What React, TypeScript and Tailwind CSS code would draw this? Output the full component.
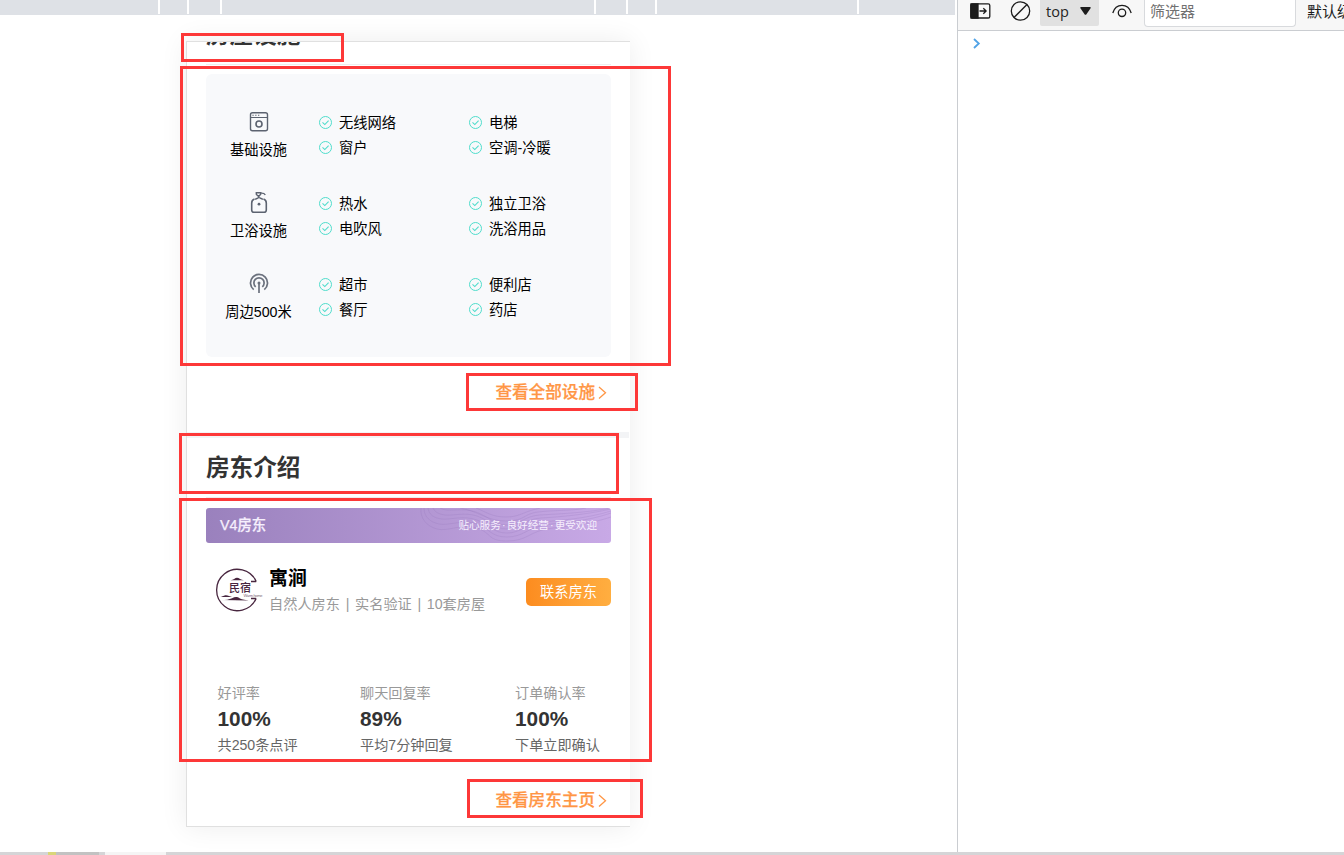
import React from "react";

const facilities = [
  { label: "基础设施", icon: "washer", items: ["无线网络", "电梯", "窗户", "空调-冷暖"] },
  { label: "卫浴设施", icon: "bath", items: ["热水", "独立卫浴", "电吹风", "洗浴用品"] },
  { label: "周边500米", icon: "signal", items: ["超市", "便利店", "餐厅", "药店"] },
];

const stats = [
  { name: "好评率", value: "100%", note: "共250条点评", width: "w-[142.5px]" },
  { name: "聊天回复率", value: "89%", note: "平均7分钟回复", width: "w-[155px]" },
  { name: "订单确认率", value: "100%", note: "下单立即确认", width: "w-[96px]" },
];

const rulerSegments = [
  "w-[158px]",
  "w-[27px]",
  "w-[31px]",
  "w-[372px]",
  "w-[30px]",
  "w-[27px]",
  "w-[200px]",
  "w-[96px]",
];

const marks = [
  "left-[181px] top-[33px] w-[163px] h-[29px]",
  "left-[180px] top-[66px] w-[491px] h-[300px]",
  "left-[466px] top-[373px] w-[172px] h-[38px]",
  "left-[179px] top-[433px] w-[440px] h-[61px]",
  "left-[179px] top-[498px] w-[473px] h-[264px]",
  "left-[467px] top-[779px] w-[176px] h-[39px]",
];

function CheckIcon() {
  return (
    <svg className="h-[13px] w-[13px] shrink-0" viewBox="0 0 13 13" fill="none" stroke="#4fdccb">
      <circle cx="6.5" cy="6.5" r="6" strokeWidth="1" />
      <path d="M3.5 6.4l2.3 2.2 3.8-3.9" strokeWidth="1.1" />
    </svg>
  );
}

function FacilityIcon({ kind }: { kind: string }) {
  if (kind === "washer") {
    return (
      <svg className="h-6 w-6" viewBox="0 0 24 24" fill="none" stroke="#5c6370" strokeWidth="1.4">
        <rect x="3.5" y="2.7" width="17" height="18" rx="2" />
        <path d="M3.3 7.5h17.4" strokeWidth="1" />
        <path d="M5.4 5.2h1.3M8.2 5.2h1.3M11 5.2h1.3" strokeWidth="1.1" />
        <circle cx="12" cy="14" r="3" strokeWidth="1.6" />
      </svg>
    );
  }
  if (kind === "bath") {
    return (
      <svg className="h-6 w-6" viewBox="0 0 24 24" fill="none" stroke="#5c6370" strokeWidth="1.6">
        <path d="M7.500 8C5.400 8.600 4.700 10 4.700 12v6.900c0 1.600.7 2.300 2.300 2.300h10c1.600 0 2.300-.7 2.300-2.300V12c0-2-.7-3.400-2.800-4" />
        <path d="M9.300 1.800h4.400v1.500l-1.400 1.400h-1.600L9.300 3.300zM13.700 2.200c2.300-.2 3.800.3 4.600 1.800" strokeWidth="1.400" />
        <path d="M11.700 4.700v1.600M8 7.800c1.500 1 2.300-1.200 4-1.200s2.500 2.200 4 1.200" strokeWidth="1.400" />
        <circle cx="12" cy="13.200" r="1.400" fill="#5c6370" stroke="none" />
      </svg>
    );
  }
  return (
    <svg className="h-6 w-6" viewBox="0 0 24 24" fill="none" stroke="#6b717d" strokeWidth="1.700">
      <path d="M6.700 17.600A8.500 8.500 0 1 1 17.300 17.600" />
      <path d="M8.700 14.800a5.100 5.100 0 1 1 6.600 0" />
      <circle cx="12" cy="11" r="1.500" fill="#6b717d" stroke="none" />
      <path d="M12 11v10" strokeWidth="1.700" />
    </svg>
  );
}

function MoreLink({ text }: { text: string }) {
  return (
    <div className="flex h-6 items-center justify-end pr-[23px] text-[16.6px] font-medium leading-6 text-[#ff9645] [-webkit-text-stroke:0.25px_#ff9645]">
      <span>{text}</span>
      <svg className="ml-[3px] h-4 w-[9px]" viewBox="0 0 9 16" fill="none" stroke="#ff9645" strokeWidth="1.3">
        <path d="M1 2L7.500 7.800 1 13.500" />
      </svg>
    </div>
  );
}

function HostLogo() {
  return (
    <svg className="h-[46px] w-[52px] shrink-0" viewBox="0 0 52 46">
      <path
        d="M41.200 14.500A20.700 20.700 0 1 0 41.200 31.500M36 14.500h5.200M36 31.500h5.200"
        fill="none"
        stroke="#48263f"
        strokeWidth="1.300"
      />
      <path d="M15.500 13.300c3-.3 4.600-2.600 6.500-2.600s4 2.300 7 2.600z" fill="#48263f" />
      <path d="M4 30c4-.3 5-1.800 7-1.800s4 1.400 6 1.800zM6 33c5 0 8-.4 11-1.800 3-1.600 5-1.800 8 .2 2 1.400 6 1.500 10.500 2.200z" fill="#48263f" />
      <text x="14" y="25.400" fontSize="11" fontWeight="500" fill="#48263f">民宿</text>
      <text x="28.500" y="30.400" fontSize="4" textLength="19" fill="#80677a">Warm home</text>
    </svg>
  );
}

function Banner() {
  return (
    <div className="relative flex h-[35px] items-center justify-between overflow-hidden rounded-[3px] bg-linear-to-r from-[#9a81bd] to-[#c8a9e6] pl-[14px] pr-[14px] text-[#f6effd]">
      <svg className="absolute left-[214px] top-0 h-[35px] w-[191px]" viewBox="0 0 191 35" fill="none" stroke="#8e70b5" strokeOpacity="0.25" strokeWidth="0.8">
        <path d="M1 0c-1 10 5 18 16 21s25-6 40-1 10 13 30 13 22-9 40-12 40-4 64-12" />
        <path d="M4 0c0 9 6 14 15 16s25-5 38 0 14 13 30 13 20-9 38-12 40-3 66-12" />
        <path d="M8 0c1 7 6 10 14 11s22-4 35 1 16 13 30 13 18-9 36-11 42-3 68-11" />
        <path d="M13 0c2 4 5 6 12 7s20-3 32 1 17 13 30 13 17-10 34-11 43-3 70-9" />
        <path d="M20 0c8 5 22-1 36 4s18 13 31 13 17-9 33-10 45-2 71-7" />
        <path d="M40 0c18 3 27 13 46 13s17-7 32-9 35-1 48-4" />
        <path d="M56 0c10 4 16 9 30 9s16-5 34-9" />
      </svg>
      <span className="relative text-[14.3px] font-medium [-webkit-text-stroke:0.25px_#f6effd]">V4房东</span>
      <span className="relative text-[10.6px]">
        贴心服务<span className="mx-[1.1px]">·</span>良好经营<span className="mx-[1.1px]">·</span>更受欢迎
      </span>
    </div>
  );
}

function Phone() {
  return (
    <div className="h-[786px] w-[444px] bg-white shadow-[0_0_26px_rgba(0,0,0,0.075)]">
      <div className="flex h-full w-full flex-col overflow-hidden border-y border-l border-[#e0e0e0]">
        <div className="mx-[19px] flex h-[23px] shrink-0 items-end border-b border-[#eeeeee] pb-[12px]">
          <h2 className="text-[23.6px] font-bold leading-[34px] text-[#333]">房屋设施</h2>
        </div>
        <div className="ml-[19px] mt-[9px] flex h-[283px] w-[405px] shrink-0 flex-col rounded-md bg-[#f8f9fb] pt-[34px] text-[14.25px] text-black">
          {facilities.map((f) => (
            <div key={f.label} className="flex h-[81px] shrink-0">
              <div className="flex w-[105px] flex-col items-center pt-[2px]">
                <FacilityIcon kind={f.icon} />
                <div className="mt-[6px] leading-5">{f.label}</div>
              </div>
              <div className="ml-2 grid h-[53px] grid-cols-[150px_130px] grid-rows-[25px_25px] pt-[2px]">
                {f.items.map((item) => (
                  <div key={item} className="flex items-center gap-[7px]">
                    <CheckIcon />
                    <span className="leading-5">{item}</span>
                  </div>
                ))}
              </div>
            </div>
          ))}
        </div>
        <div className="mt-[24px] shrink-0">
          <MoreLink text="查看全部设施" />
        </div>
        <div className="mt-[27px] h-[6px] w-[442px] shrink-0 bg-[#f3f4f6]" />
        <div className="mx-[19px] flex h-[60px] w-[405px] shrink-0 items-center border-b border-[#eeeeee]">
          <h2 className="text-[23.6px] font-bold leading-[34px] text-[#333]">房东介绍</h2>
        </div>
        <div className="ml-[19px] mt-[10px] w-[405px] shrink-0">
          <Banner />
          <div className="mt-[24px] flex h-[46px] items-start pl-[9px]">
            <HostLogo />
            <div className="ml-[2px]">
              <div className="text-[18.9px] font-bold leading-6 text-black">寓涧</div>
              <div className="whitespace-nowrap text-[14.2px] leading-[26px] text-[#999]">
                自然人房东<span className="mx-[5.7px]">|</span>实名验证<span className="mx-[5.7px]">|</span>10套房屋
              </div>
            </div>
            <div className="ml-auto mt-[11px] flex h-[28px] w-[85px] items-center justify-center rounded-[5px] bg-linear-to-r from-[#fc8c1f] to-[#ffae40] pt-px text-[14.25px] text-white">
              联系房东
            </div>
          </div>
          <div className="mt-[70px] flex pl-[11.5px]">
            {stats.map((s) => (
              <div key={s.name} className={"shrink-0 whitespace-nowrap text-[14.15px] " + s.width}>
                <div className="leading-5 text-[#999]">{s.name}</div>
                <div className="text-[20.8px] font-bold leading-8 text-[#333]">{s.value}</div>
                <div className="leading-5 text-[#666]">{s.note}</div>
              </div>
            ))}
          </div>
        </div>
        <div className="mt-[34px] shrink-0">
          <MoreLink text="查看房东主页" />
        </div>
      </div>
    </div>
  );
}

function DevTools() {
  return (
    <div className="flex h-[852px] min-w-0 flex-1 flex-col border-l border-[#cacdd1] bg-white font-['Open_Sans','Noto_Sans_CJK_SC',sans-serif]">
      <div className="flex h-[31px] shrink-0 items-start overflow-hidden border-b border-[#cacdd1] bg-[#f7f7f7]">
        <svg className="ml-[12px] mt-[3px] h-4 w-[21px] shrink-0" viewBox="0 0 21 16" fill="none" stroke="#1b1b1b" strokeWidth="1.3">
          <rect x="0.8" y="0.8" width="19" height="14.2" rx="1.6" />
          <path d="M1 1h7v14H1z" fill="#1b1b1b" />
          <path d="M9.5 8h6.500M13.300 5.200L16.100 8l-2.800 2.800" />
        </svg>
        <svg className="ml-[19px] mt-px h-[21px] w-[21px] shrink-0" viewBox="0 0 21 21" fill="none" stroke="#1b1b1b" strokeWidth="1.3">
          <circle cx="10.5" cy="10" r="9.2" />
          <path d="M4 16.5L17 3.5" />
        </svg>
        <div className="ml-[9px] flex h-[26px] w-[59px] shrink-0 items-start rounded-b-[2px] bg-[#e1e1e1] pl-[6px] text-[14.5px] leading-[23px] text-[#242424]">
          top
          <svg className="ml-[11px] mt-[7px] h-2 w-[11px]" viewBox="0 0 11 8">
            <path d="M1.300 0h8.400c1 0 1.300.6.7 1.500L6.300 7.400c-.5.6-1.100.6-1.600 0L.6 1.500C0 .6.3 0 1.300 0z" fill="#1b1b1b" />
          </svg>
        </div>
        <svg className="ml-[13px] mt-[4px] h-[14px] w-5 shrink-0" viewBox="0 0 20 14" fill="none" stroke="#1b1b1b" strokeWidth="1.3">
          <path d="M.8 9C2.200 4 5.500 1.300 10 1.300S17.800 4 19.200 9" />
          <circle cx="10" cy="8.800" r="3.700" />
        </svg>
        <div className="ml-[12px] h-[27px] w-[152px] shrink-0 rounded-b-[4px] border-x border-b border-[#d8dadd] bg-white pl-[5px] text-[15px] leading-[23px] text-[#717171]">
          筛选器
        </div>
        <div className="ml-[11px] shrink-0 whitespace-nowrap text-[15px] leading-[23px] text-[#1b1b1b]">默认级别</div>
      </div>
      <svg className="ml-[15px] mt-[7px] h-[11px] w-[8px]" viewBox="0 0 8 11" fill="none" stroke="#51a3e6" strokeWidth="1.800">
        <path d="M1 1l4.800 4.500L1 10" />
      </svg>
    </div>
  );
}

export default function App() {
  return (
    <div className="relative flex h-[855px] w-[1344px] flex-col overflow-hidden bg-white font-['Liberation_Sans','Noto_Sans_CJK_SC',sans-serif]">
      <div className="flex h-[852px] w-full">
        <div className="flex w-[957px] shrink-0 flex-col">
          <div className="flex h-[15px] w-[955px] shrink-0 gap-[2px] border-b border-[#dee1e6]">
            {rulerSegments.map((w, i) => (
              <div key={i} className={"h-full shrink-0 bg-[#dee1e6] " + w} />
            ))}
          </div>
          <div className="pl-[186px] pt-[26px]">
            <Phone />
          </div>
        </div>
        <DevTools />
      </div>
      <div className="z-10 flex h-[3px] w-full bg-[#d5d5d7]">
        <div className="ml-[48px] w-[8px] bg-[#d9d67a]" />
        <div className="w-[43px] bg-[#c2c2c2]" />
        <div className="ml-[6px] w-[61px] bg-[#f5f5f5]" />
      </div>
      {marks.map((m) => (
        <div key={m} className={"pointer-events-none absolute border-[3px] border-[#fd3838] " + m} />
      ))}
    </div>
  );
}
